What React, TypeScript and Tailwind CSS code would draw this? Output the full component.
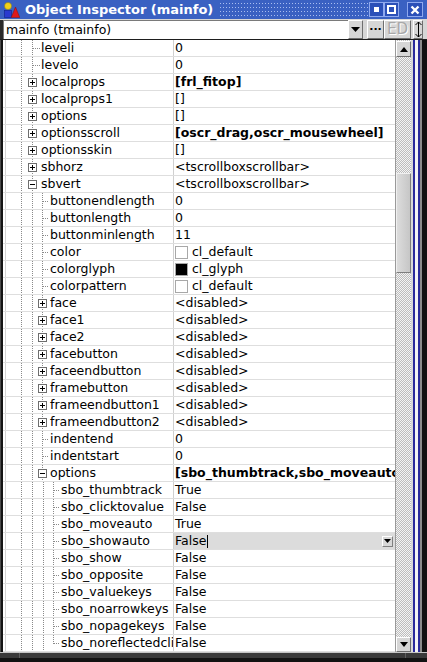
import React from 'react';

type Kind = 'leaf' | 'plus' | 'minus';
type R = {
  name: string;
  depth: 1 | 2 | 3;
  kind: Kind;
  value: string;
  bold?: boolean;
  swatch?: 'white' | 'black';
  selected?: boolean;
  last?: boolean;
};

const rows: R[] = [
  { name: 'leveli', depth: 1, kind: 'leaf', value: '0' },
  { name: 'levelo', depth: 1, kind: 'leaf', value: '0' },
  { name: 'localprops', depth: 1, kind: 'plus', value: '[frl_fitop]', bold: true },
  { name: 'localprops1', depth: 1, kind: 'plus', value: '[]' },
  { name: 'options', depth: 1, kind: 'plus', value: '[]' },
  { name: 'optionsscroll', depth: 1, kind: 'plus', value: '[oscr_drag,oscr_mousewheel]', bold: true },
  { name: 'optionsskin', depth: 1, kind: 'plus', value: '[]' },
  { name: 'sbhorz', depth: 1, kind: 'plus', value: '<tscrollboxscrollbar>' },
  { name: 'sbvert', depth: 1, kind: 'minus', value: '<tscrollboxscrollbar>' },
  { name: 'buttonendlength', depth: 2, kind: 'leaf', value: '0' },
  { name: 'buttonlength', depth: 2, kind: 'leaf', value: '0' },
  { name: 'buttonminlength', depth: 2, kind: 'leaf', value: '11' },
  { name: 'color', depth: 2, kind: 'leaf', value: 'cl_default', swatch: 'white' },
  { name: 'colorglyph', depth: 2, kind: 'leaf', value: 'cl_glyph', swatch: 'black' },
  { name: 'colorpattern', depth: 2, kind: 'leaf', value: 'cl_default', swatch: 'white' },
  { name: 'face', depth: 2, kind: 'plus', value: '<disabled>' },
  { name: 'face1', depth: 2, kind: 'plus', value: '<disabled>' },
  { name: 'face2', depth: 2, kind: 'plus', value: '<disabled>' },
  { name: 'facebutton', depth: 2, kind: 'plus', value: '<disabled>' },
  { name: 'faceendbutton', depth: 2, kind: 'plus', value: '<disabled>' },
  { name: 'framebutton', depth: 2, kind: 'plus', value: '<disabled>' },
  { name: 'frameendbutton1', depth: 2, kind: 'plus', value: '<disabled>' },
  { name: 'frameendbutton2', depth: 2, kind: 'plus', value: '<disabled>' },
  { name: 'indentend', depth: 2, kind: 'leaf', value: '0' },
  { name: 'indentstart', depth: 2, kind: 'leaf', value: '0' },
  { name: 'options', depth: 2, kind: 'minus', value: '[sbo_thumbtrack,sbo_moveauto]', bold: true },
  { name: 'sbo_thumbtrack', depth: 3, kind: 'leaf', value: 'True' },
  { name: 'sbo_clicktovalue', depth: 3, kind: 'leaf', value: 'False' },
  { name: 'sbo_moveauto', depth: 3, kind: 'leaf', value: 'True' },
  { name: 'sbo_showauto', depth: 3, kind: 'leaf', value: 'False', selected: true },
  { name: 'sbo_show', depth: 3, kind: 'leaf', value: 'False' },
  { name: 'sbo_opposite', depth: 3, kind: 'leaf', value: 'False' },
  { name: 'sbo_valuekeys', depth: 3, kind: 'leaf', value: 'False' },
  { name: 'sbo_noarrowkeys', depth: 3, kind: 'leaf', value: 'False' },
  { name: 'sbo_nopagekeys', depth: 3, kind: 'leaf', value: 'False' },
  { name: 'sbo_noreflectedcli', depth: 3, kind: 'leaf', value: 'False', last: true },
];

const DOT = '#8a8a8a';

function Tree({ depth, kind, last }: { depth: 1 | 2 | 3; kind: Kind; last?: boolean }) {
  const textX = depth === 1 ? 41 : depth === 2 ? 50 : 61;
  const w = textX - 3;
  const anc = depth === 1 ? [21] : depth === 2 ? [21, 32] : [21, 32, 43];
  const own = depth === 1 ? 32 : depth === 2 ? 42 : 53;
  const boxLeft = own - 4;
  const o = (x: number) => x - 3 + 0.5;
  return (
    <svg width={w} height={16} className="block shrink-0">
      <line x1={o(5)} y1={0} x2={o(5)} y2={16} stroke="#d4d4d4" />
      {anc.map((x) => (
        <line key={x} x1={o(x)} y1={0} x2={o(x)} y2={16} stroke={DOT} strokeDasharray="1 1" />
      ))}
      <line x1={o(own)} y1={0} x2={o(own)} y2={last ? 9 : 16} stroke={DOT} strokeDasharray="1 1" />
      {kind === 'leaf' ? (
        <line x1={own - 3 + 1} y1={8.5} x2={textX - 3 - 1} y2={8.5} stroke={DOT} strokeDasharray="1 1" />
      ) : (
        <g>
          <rect x={o(boxLeft)} y={4.5} width={8} height={8} fill="#ffffff" stroke="#6e6e6e" />
          <line x1={boxLeft - 3 + 2} y1={8.5} x2={boxLeft - 3 + 7} y2={8.5} stroke="#000" />
          {kind === 'plus' && <line x1={o(boxLeft + 4)} y1={6} x2={o(boxLeft + 4)} y2={11} stroke="#000" />}
        </g>
      )}
    </svg>
  );
}

function Row({ r }: { r: R }) {
  return (
    <div className="flex h-[17px] border-b border-[#dedede] shrink-0">
      <div className="flex w-[171px] shrink-0 items-center overflow-hidden whitespace-nowrap border-r border-[#d0d0d0]">
        <Tree depth={r.depth} kind={r.kind} last={r.last} />
        <span className="leading-[16px]">{r.name}</span>
      </div>
      <div
        className={`flex min-w-0 flex-1 items-center overflow-hidden whitespace-nowrap pl-[1px] ${
          r.selected ? 'bg-[#dcdcdc]' : ''
        }`}
      >
        {r.swatch && (
          <span
            className={`mr-[4px] h-[13px] w-[13px] shrink-0 border border-[#a8a8a8] ${
              r.swatch === 'black' ? 'bg-black' : 'bg-white'
            }`}
          />
        )}
        <span className={`leading-[16px] ${r.bold ? 'font-bold' : ''}`}>{r.value}</span>
        {r.selected && (
          <>
            <span className="ml-[1px] h-[13px] w-[1px] bg-black" />
            <span className="flex-1" />
            <span className="mr-[2px] flex h-[11px] w-[11px] items-center justify-center border border-b-[#808080] border-l-white border-r-[#808080] border-t-white bg-[#d8d8d8]">
              <svg width="7" height="4" className="block">
                <polygon points="0,0 7,0 3.5,4" fill="#000" />
              </svg>
            </span>
          </>
        )}
      </div>
    </div>
  );
}

function RaisedBtn({ className, children }: { className: string; children?: React.ReactNode }) {
  return (
    <div
      className={`flex items-center justify-center border border-b-[#6e6e6e] border-l-[#ffffff] border-r-[#6e6e6e] border-t-[#ffffff] bg-[#d6d6d6] ${className}`}
    >
      {children}
    </div>
  );
}

export default function App() {
  return (
    <div className="flex h-[662px] w-[427px] flex-col overflow-hidden bg-[#d6d6d6] font-['DejaVu_Sans',sans-serif] text-[12.5px] text-black">
      {/* Title bar */}
      <div className="flex h-[19px] shrink-0 items-center bg-[#3a61c2]">
        <svg width="16" height="16" className="ml-[4px] block shrink-0" viewBox="0 0 16 16">
          <circle cx="4" cy="4" r="3.5" fill="#f2d21c" stroke="#8a7a10" strokeWidth="0.5" />
          <rect x="0.5" y="8.5" width="7" height="7" fill="#2a3ad0" stroke="#10208a" strokeWidth="0.6" />
          <polygon points="11.5,5 15.8,15.5 7.2,15.5" fill="#e01818" stroke="#801010" strokeWidth="0.5" />
        </svg>
        <span className="ml-[5px] whitespace-nowrap text-[13px] font-bold leading-[19px] text-white">
          Object Inspector (mainfo)
        </span>
        <div className="ml-[5px] h-full flex-1 bg-[linear-gradient(90deg,#3a61c2_2px,transparent_2px),linear-gradient(#3a61c2_3px,#a9bdf0_3px)] bg-[length:3px_4px]" />
        <div className="ml-[1px] flex h-[15px] w-[15px] items-center justify-center border border-[#8ea8ee] bg-[#2b50b8]">
          <div className="h-[5px] w-[5px] bg-white" />
        </div>
        <div className="flex h-[15px] w-[15px] items-center justify-center border border-[#8ea8ee] bg-[#2b50b8]">
          <div className="h-[9px] w-[9px] border-2 border-white" />
        </div>
        <div className="w-[8px]" />
        <div className="mr-[4px] flex h-[15px] w-[16px] items-center justify-center border border-[#8ea8ee] bg-[#2b50b8]">
          <svg width="10" height="10" className="block">
            <path d="M1.5 1.5 L8.5 8.5 M8.5 1.5 L1.5 8.5" stroke="#fff" strokeWidth="2.4" />
          </svg>
        </div>
      </div>

      {/* Combo row */}
      <div className="flex h-[20px] shrink-0 items-stretch pt-[1px]">
        <div className="w-[3px] shrink-0 bg-[#2a2a2a]" />
        <div className="flex w-[345px] shrink-0 items-center border-l border-t border-[#7a7a7a] bg-white pl-[2px] text-[12.5px]">
          mainfo (tmainfo)
        </div>
        <RaisedBtn className="w-[15px] shrink-0">
          <svg width="9" height="5" className="block">
            <polygon points="0,0 9,0 4.5,5" fill="#000" />
          </svg>
        </RaisedBtn>
        <div className="w-[4px] shrink-0" />
        <RaisedBtn className="w-[17px] shrink-0">
          <span className="text-[11px] font-bold leading-none">···</span>
        </RaisedBtn>
        <RaisedBtn className="w-[27px] shrink-0">
          <span className="text-[15px] leading-none text-[#a8a8a8] [text-shadow:1px_1px_0_#ffffff]">ED</span>
        </RaisedBtn>
        <div className="w-[2px] shrink-0" />
        <RaisedBtn className="w-[10px] shrink-0">
          <svg width="7" height="17" className="block">
            <path d="M3.5 1 L3.5 16" stroke="#000" strokeWidth="1" />
            <path d="M0.5 4 L3.5 1 L6.5 4 M0.5 13 L3.5 16 L6.5 13" stroke="#000" strokeWidth="1" fill="none" />
          </svg>
        </RaisedBtn>
        <div className="flex-1" />
      </div>
      <div className="h-[1px] shrink-0 bg-[#1e1e1e]" />

      {/* Main */}
      <div className="flex h-[612px] shrink-0">
        <div className="flex w-[3px] shrink-0">
          <div className="w-[1px] bg-[#4a4a4a]" />
          <div className="w-[2px] bg-[#141414]" />
        </div>
        <div className="flex w-[392px] shrink-0 flex-col bg-white">
          {rows.map((r, i) => (
            <Row key={i} r={r} />
          ))}
        </div>
        {/* Scrollbar */}
        <div className="flex w-[16px] shrink-0 flex-col border-l border-[#9a9a9a] bg-[repeating-conic-gradient(#bdbdbd_0_25%,#f4f4f4_0_50%)] bg-[length:2px_2px]">
          <div className="h-[1px] shrink-0" />
          <RaisedBtn className="h-[16px] shrink-0">
            <svg width="8" height="5" className="block">
              <polygon points="0,5 8,5 4,0" fill="#000" />
            </svg>
          </RaisedBtn>
          <div className="h-[116px] shrink-0" />
          <div className="h-[100px] shrink-0 border border-b-[#7e7e7e] border-l-[#f0f0f0] border-r-[#7e7e7e] border-t-[#f0f0f0] bg-[linear-gradient(90deg,#dcdcdc,#c6c6c6)]" />
          <div className="flex-1" />
          <RaisedBtn className="h-[15px] shrink-0">
            <svg width="8" height="5" className="block">
              <polygon points="0,0 8,0 4,5" fill="#000" />
            </svg>
          </RaisedBtn>
        </div>
        {/* Right stripes */}
        <div className="flex w-[16px] shrink-0">
          <div className="w-[2px] bg-[#d8d8d8]" />
          <div className="w-[2px] bg-[#2a2a9c]" />
          <div className="w-[3px] bg-[#f4f4f4]" />
          <div className="w-[2px] bg-[#2a2a9c]" />
          <div className="w-[2px] bg-[#8c8c8c]" />
          <div className="w-[5px] bg-[#121212]" />
        </div>
      </div>

      {/* Bottom frame */}
      <div className="flex h-[10px] shrink-0 flex-col">
        <div className="h-[1px] bg-[#c4c4c4]" />
        <div className="flex h-[5px] bg-[#3a3a3a]">
          <div className="w-[20px] border-r border-[#5e5e5e]" />
          <div className="w-[386px] border-r border-[#5e5e5e]" />
          <div className="flex-1" />
        </div>
        <div className="flex-1 bg-[#121212]" />
      </div>
    </div>
  );
}
